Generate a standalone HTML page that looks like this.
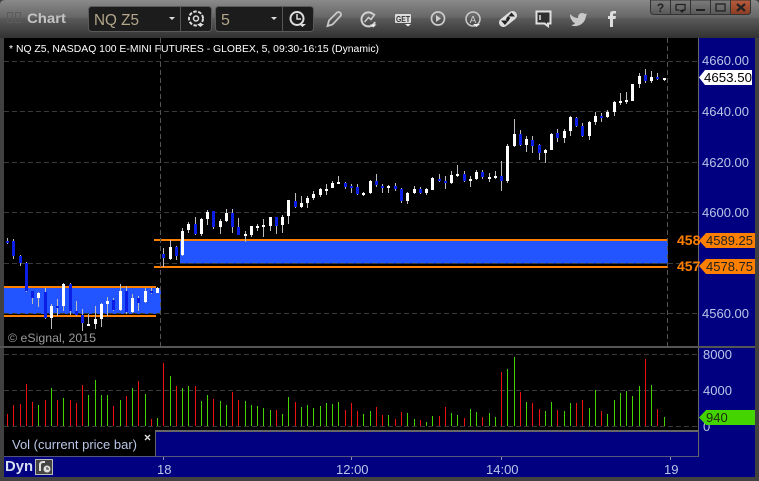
<!DOCTYPE html>
<html><head><meta charset="utf-8">
<style>
html,body{margin:0;padding:0;background:#3a3a3a}
#w{position:relative;width:759px;height:481px;overflow:hidden;background:#3c3c3c;font-family:"Liberation Sans",sans-serif}
svg{position:absolute;left:0;top:0}
text{font-family:"Liberation Sans",sans-serif}
</style></head><body><div id="w">
<svg width="759" height="481" viewBox="0 0 759 481">
<defs>
<linearGradient id="t" x1="0" y1="0" x2="0" y2="1"><stop offset="0" stop-color="#8a8a8a"/><stop offset=".46" stop-color="#666"/><stop offset=".48" stop-color="#5a5a5a"/><stop offset="1" stop-color="#323232"/></linearGradient>
<linearGradient id="b" x1="0" y1="0" x2="0" y2="1"><stop offset="0" stop-color="#7c7c7c"/><stop offset="1" stop-color="#585858"/></linearGradient>
<linearGradient id="r" x1="0" y1="0" x2="0" y2="1"><stop offset="0" stop-color="#b85c3c"/><stop offset="1" stop-color="#8c3c24"/></linearGradient>
</defs>
<rect width="759" height="481" fill="#414141"/>
<path d="M0 38V5Q0 0 5 0H754Q759 0 759 5V38Z" fill="url(#t)"/>
<!-- main panes -->
<rect x="4" y="38" width="694" height="308" fill="#000"/>
<rect x="698" y="38" width="57" height="439" fill="#000080"/>
<rect x="4" y="346" width="694" height="2" fill="#555"/>
<rect x="4" y="348" width="694" height="83" fill="#000"/>
<rect x="4" y="431" width="151" height="25" fill="#000"/>
<rect x="155" y="431" width="543" height="25" fill="#000080"/>
<rect x="4" y="456" width="694" height="21" fill="#000080"/>
<rect x="155" y="430" width="543" height="2" fill="#666"/>
<rect x="155" y="431" width="1" height="25" fill="#666"/>
<rect x="4" y="456" width="694" height="1" fill="#55557a"/>
<rect x="698" y="38" width="1" height="419" fill="#666"/>
<rect x="0" y="346" width="755" height="2" fill="#555"/>
<!-- zones -->
<rect x="4" y="288" width="157" height="26" fill="#2255ff"/>
<rect x="180" y="241" width="488" height="22.5" fill="#2255ff"/>
<g fill="#ff8000"><rect x="4" y="286" width="152" height="2"/><rect x="4" y="315" width="152" height="2"/><rect x="154" y="239" width="514" height="2"/><rect x="154" y="266" width="514" height="2"/></g>
<!-- grid -->
<g stroke="#3a3a3a" stroke-dasharray="5 3" fill="none" shape-rendering="crispEdges"><path d="M4 61.5H698M4 111.5H698M4 162.5H698M4 212.5H698M4 263.5H698M4 313.5H698M4 354.5H698M4 390.5H698M4 426.5H698"/><path d="M160.5 38V346M667.5 38V346" stroke="#555"/></g>
<!-- candles -->
<path shape-rendering="crispEdges" fill="none" stroke="#bdbdbd" d="M7.5 238V244M13.5 239V259M20.5 255V266M26.5 262V292M32.5 291V304M38.5 292V307M45.5 288V319M51.5 304V329M57.5 299V316M63.5 283V311M70.5 283V315M76.5 301V316M82.5 309V331M88.5 314V326M95.5 306V329M101.5 303V327M107.5 297V316M113.5 298V311M120.5 284V311M126.5 286V314M132.5 294V313M138.5 296V311M145.5 288V303M151.5 288V294M157.5 287V293M163.5 248V267M170.5 240V260M176.5 246V260M182.5 228V256M188.5 222V233M195.5 217V235M201.5 218V236M207.5 210V225M213.5 211V229M220.5 219V234M226.5 209V222M232.5 209V233M238.5 218V235M245.5 231V242M251.5 226V237M257.5 224V231M263.5 219V237M270.5 217V231M276.5 217V234M282.5 215V233M288.5 200V224M295.5 193V208M301.5 196V208M307.5 196V208M313.5 191V200M320.5 188V197M326.5 184V195M332.5 181V188M338.5 176V184M345.5 182V189M351.5 184V193M357.5 184V195M363.5 192V196M370.5 180V194M376.5 174V187M382.5 184V193M388.5 185V193M395.5 183V191M401.5 188V203M407.5 192V204M414.5 186V194M420.5 187V194M426.5 188V195M432.5 177V190M439.5 174V182M445.5 176V189M451.5 171V184M457.5 165V177M464.5 171V182M470.5 176V187M476.5 170V180M482.5 170V179M489.5 173V182M495.5 171V179M501.5 161V191M507.5 144V183M514.5 119V147M520.5 130V146M526.5 136V152M532.5 136V153M539.5 144V160M545.5 149V163M551.5 133V150M557.5 129V142M564.5 129V143M570.5 116V136M576.5 117V127M582.5 123V137M589.5 121V140M595.5 112V125M601.5 113V122M607.5 110V118M614.5 101V116M620.5 93V105M626.5 92V104M632.5 84V101M639.5 73V88M645.5 69V83M651.5 71V83M657.5 73V80M664.5 78V81"/>
<path shape-rendering="crispEdges" fill="none" stroke="#fff" stroke-width="3" d="M38.5 293V298M51.5 306V318M63.5 284V306M88.5 324V326M95.5 319V324M101.5 304V319M107.5 301V304M120.5 291V310M132.5 298V312M145.5 291V302M157.5 288V293M170.5 247V259M182.5 231V255M188.5 224V230M201.5 219V234M207.5 212V219M220.5 221V227M226.5 213V221M245.5 234V236M251.5 226V235M257.5 226V228M263.5 225V227M270.5 217V226M282.5 217V225M288.5 200V216M301.5 203V207M307.5 198V203M313.5 194V198M320.5 189V195M326.5 189V191M332.5 183V188M338.5 182V184M363.5 193V195M370.5 181V193M388.5 186V188M407.5 193V201M414.5 189V193M426.5 189V193M432.5 178V190M451.5 175V183M457.5 174V176M470.5 179V181M476.5 172V179M489.5 177V179M495.5 176V178M507.5 146V181M514.5 134V146M526.5 139V145M545.5 150V153M551.5 134V150M564.5 131V138M570.5 117V131M589.5 122V136M595.5 116V122M607.5 112V117M614.5 102V112M620.5 101V103M626.5 100V102M632.5 84V101M639.5 76V84M651.5 77V81M664.5 78V80"/>
<path shape-rendering="crispEdges" fill="none" stroke="#0a1ee6" stroke-width="3" d="M7.5 241V243M13.5 241V256M20.5 256V263M26.5 263V291M32.5 291V298M45.5 292V318M57.5 306V308M70.5 284V311M76.5 311V315M82.5 315V323M113.5 300V310M126.5 291V312M138.5 298V303M151.5 291V293M163.5 254V258M176.5 247V256M195.5 224V234M213.5 211V227M232.5 213V227M238.5 227V235M276.5 217V226M295.5 201V207M345.5 183V187M351.5 186V188M357.5 187V194M376.5 181V185M382.5 186V188M395.5 186V189M401.5 189V201M420.5 189V193M439.5 179V181M445.5 181V183M464.5 174V181M482.5 172V177M501.5 176V181M520.5 134V145M532.5 140V146M539.5 145V153M557.5 133V138M576.5 118V126M582.5 126V136M601.5 116V118M645.5 75V81M657.5 77V79"/>
<!-- volume -->
<path shape-rendering="crispEdges" fill="none" stroke="#ee1111" d="M7.5 414V426M13.5 405V426M20.5 404V426M26.5 384V426M32.5 402V426M45.5 400V426M57.5 400V426M70.5 400V426M76.5 403V426M82.5 385V426M113.5 406V426M126.5 396V426M138.5 381V426M151.5 419V426M163.5 363V426M176.5 386V426M195.5 386V426M213.5 399V426M232.5 392V426M238.5 400V426M276.5 410V426M295.5 402V426M345.5 410V426M351.5 403V426M357.5 411V426M376.5 407V426M382.5 415V426M395.5 419V426M401.5 412V426M420.5 420V426M439.5 416V426M445.5 407V426M464.5 418V426M482.5 417V426M501.5 372V426M520.5 392V426M532.5 403V426M539.5 409V426M557.5 410V426M576.5 403V426M582.5 400V426M601.5 411V426M645.5 359V426M657.5 409V426"/>
<path shape-rendering="crispEdges" fill="none" stroke="#44d400" d="M38.5 405V426M51.5 388V426M63.5 398V426M88.5 395V426M95.5 380V426M101.5 395V426M107.5 395V426M120.5 400V426M132.5 388V426M145.5 394V426M157.5 418V426M170.5 376V426M182.5 388V426M188.5 386V426M201.5 401V426M207.5 395V426M220.5 401V426M226.5 405V426M245.5 401V426M251.5 405V426M257.5 406V426M263.5 408V426M270.5 410V426M282.5 414V426M288.5 397V426M301.5 407V426M307.5 405V426M313.5 408V426M320.5 406V426M326.5 403V426M332.5 404V426M338.5 402V426M363.5 414V426M370.5 411V426M388.5 415V426M407.5 413V426M414.5 419V426M426.5 422V426M432.5 416V426M451.5 413V426M457.5 415V426M470.5 409V426M476.5 412V426M489.5 413V426M495.5 417V426M507.5 369V426M514.5 357V426M526.5 402V426M545.5 411V426M551.5 402V426M564.5 411V426M570.5 403V426M589.5 408V426M595.5 390V426M607.5 414V426M614.5 400V426M620.5 393V426M626.5 391V426M632.5 396V426M639.5 386V426M651.5 385V426M664.5 417V426"/>
<!-- header text -->
<text x="9" y="52" fill="#fff" font-size="10" textLength="370" lengthAdjust="spacingAndGlyphs">* NQ Z5, NASDAQ 100 E-MINI FUTURES - GLOBEX, 5, 09:30-16:15 (Dynamic)</text>
<text x="8" y="342" fill="#9a9a9a" font-size="12" textLength="88" lengthAdjust="spacingAndGlyphs">© eSignal, 2015</text>
<!-- axis -->
<g fill="#b9c6e6" font-size="13">
<text x="702" y="65">4660.00</text><text x="702" y="116">4640.00</text><text x="702" y="167">4620.00</text><text x="702" y="217">4600.00</text><text x="702" y="318">4560.00</text>
<text x="703" y="359">8000</text><text x="703" y="395">4000</text><text x="703" y="431">0</text>
<text x="157" y="474">18</text><text x="336" y="474">12:00</text><text x="486" y="474">14:00</text><text x="664" y="474">19</text>
</g>
<path d="M163.5 457V460M351.5 457V460M501.5 457V460M670.5 457V460" stroke="#8a8ab0" fill="none"/>
<!-- tags -->
<path d="M699 77.5L705 70H752V85H705Z" fill="#fff"/><text x="704" y="82" fill="#000" font-size="13" textLength="48" lengthAdjust="spacingAndGlyphs">4653.50</text>
<path d="M699 240.5L706 233H755V248H706Z" fill="#ff8000"/><text x="706" y="245" fill="#222" font-size="13" textLength="47" lengthAdjust="spacingAndGlyphs">4589.25</text>
<path d="M699 266L706 259H755V274H706Z" fill="#ff8000"/><text x="706" y="271" fill="#222" font-size="13" textLength="47" lengthAdjust="spacingAndGlyphs">4578.75</text>
<g fill="#ff8000" font-size="14" font-weight="bold"><text x="677" y="245">458</text><text x="677" y="271">457</text></g>
<path d="M699 417.5L706 410H755V425H706Z" fill="#44d400"/><text x="706" y="422" fill="#1a2a10" font-size="13">940</text>
<!-- bottom labels -->
<text x="12" y="449" fill="#b9c6e6" font-size="12.5" textLength="125" lengthAdjust="spacingAndGlyphs">Vol (current price bar)</text>
<path d="M145 435L150 440M150 435L145 440" stroke="#ddd" stroke-width="1.4"/>
<text x="5" y="471" fill="#d8dff0" font-size="15" font-weight="bold" textLength="28" lengthAdjust="spacingAndGlyphs">Dyn</text>
<rect x="35.500" y="459.500" width="17" height="15" fill="#444" stroke="#bbb"/>
<path d="M40 471V465Q40 462 43 462H45" fill="none" stroke="#ddd" stroke-width="2"/><circle cx="47" cy="469" r="3.500" fill="#ddd"/><path d="M47 467V469H49" fill="none" stroke="#333"/>
<!-- title -->
<g fill="none" stroke="#5c5c5c"><rect x="7.500" y="12.500" width="5" height="10"/><rect x="15.500" y="12.500" width="5" height="10"/></g>
<text x="27" y="23" fill="#c4c4c4" font-size="14" font-weight="bold" textLength="39" lengthAdjust="spacingAndGlyphs">Chart</text>
<rect x="88.500" y="6.500" width="123" height="25" rx="3" fill="#1c1c1c" stroke="#5a5a5a"/>
<rect x="215.500" y="6.500" width="98" height="25" rx="3" fill="#1c1c1c" stroke="#5a5a5a"/>
<path d="M180.500 6V31M282.500 6V31" stroke="#555"/>
<text x="94" y="25" fill="#b3a68a" font-size="16" textLength="45" lengthAdjust="spacingAndGlyphs">NQ Z5</text>
<text x="221" y="25" fill="#b3a68a" font-size="16">5</text>
<path d="M169 17H175L172 20ZM271 17H277L274 20ZM197 24H204L200.500 27ZM299 24H306L302.500 27Z" fill="#ddd"/>
<!-- gear -->
<circle cx="196" cy="18.500" r="7" fill="none" stroke="#ddd" stroke-width="2" stroke-dasharray="3.500 1.500"/><circle cx="196" cy="18.500" r="2.500" fill="none" stroke="#ddd" stroke-width="1.500"/>
<!-- clock -->
<circle cx="297" cy="18.500" r="6.500" fill="none" stroke="#ddd" stroke-width="2"/><path d="M297 14V19H301" fill="none" stroke="#ddd" stroke-width="1.500"/>
<!-- pencil -->
<path d="M327.500 26L329 20.500L337 12.500Q339 11.500 340.500 13Q341.500 15 340.500 16L332.500 24.500Z" fill="none" stroke="#c8c8c8" stroke-width="1.800"/>
<!-- refresh -->
<path d="M373.500 14.500A7 7 0 1 0 375 22" fill="none" stroke="#d0d0d0" stroke-width="2"/><path d="M364.500 22L368.500 17.500L371 19.500L375 14" fill="none" stroke="#d0d0d0" stroke-width="1.500"/><path d="M370 24.500H376.500L373.200 27.500Z" fill="#eee"/>
<!-- GET -->
<rect x="395" y="14" width="16" height="9" rx="1" fill="#ddd"/><text x="396" y="22" font-size="8" font-weight="bold" fill="#333" textLength="14" lengthAdjust="spacingAndGlyphs">GET</text><path d="M405 24H411L408 26.500Z" fill="#eee"/>
<!-- play -->
<circle cx="438" cy="18.500" r="6.500" fill="none" stroke="#ccc" stroke-width="1.700"/><path d="M436 15V22L441 18.500Z" fill="#ccc"/>
<!-- A -->
<circle cx="473" cy="19" r="7" fill="none" stroke="#ccc" stroke-width="1.500"/><text x="473" y="23" font-size="10" fill="#ccc" text-anchor="middle">A</text><path d="M473 24H480L476.500 27Z" fill="#eee"/>
<!-- diamond -->
<path d="M503.500 22.500L512.500 15.500" stroke="#ddd" stroke-width="9" stroke-linecap="round"/>
<path d="M511.500 12.500L515 16.500H508ZM505 25L501 20.500H508.500Z" fill="#222"/><path d="M509 17L507 20.500" stroke="#222" stroke-width="3"/>
<!-- speech -->
<path d="M536.500 11.500H550.500V23.500H548V26L544.500 23.500H536.500Z" fill="#2f2f2f" stroke="#e0e0e0" stroke-width="2"/><path d="M540 15V20" stroke="#e0e0e0" stroke-width="1.500"/>
<!-- twitter -->
<path d="M570 14Q574 18 578 18Q578 13 582 13Q584 13 585 14L587 13.500L586 16Q585 24 577 26Q573 26.500 571 25Q574 25 575 23Q572 22 572 20Q570 19 570 14Z" fill="#c8c8c8"/>
<!-- f -->
<path d="M610 27V19H608V16H610V14Q610 11 613 11H616V13.500H614Q613 13.500 613 15V16H616L615.500 19H613V27Z" fill="#ddd"/>
<!-- window buttons -->
<path d="M650.500 0V11Q650.500 14.500 654 14.500H747Q750.500 14.500 750.500 11V0Z" fill="url(#b)" stroke="#333"/>
<path d="M730.500 0H750.500V11Q750.500 14.500 747 14.500H730.500Z" fill="url(#r)" stroke="#333"/>
<path d="M670.500 0V14M690.500 0V14M710.500 0V14" stroke="#333"/>
<text x="660.500" y="12" font-size="12" font-weight="bold" fill="#222" text-anchor="middle">?</text>
<path d="M676 4.500H685V10H682M676 4.500V10H679" fill="none" stroke="#222" stroke-width="1.300"/><path d="M679 10H685L682 13Z" fill="#222"/>
<rect x="696" y="9" width="9" height="2" fill="#222"/>
<rect x="716" y="4" width="9" height="7" fill="none" stroke="#222" stroke-width="1.300"/>
<path d="M737 4L745 11M745 4L737 11" stroke="#222" stroke-width="2.200"/>
</svg>
</div></body></html>
